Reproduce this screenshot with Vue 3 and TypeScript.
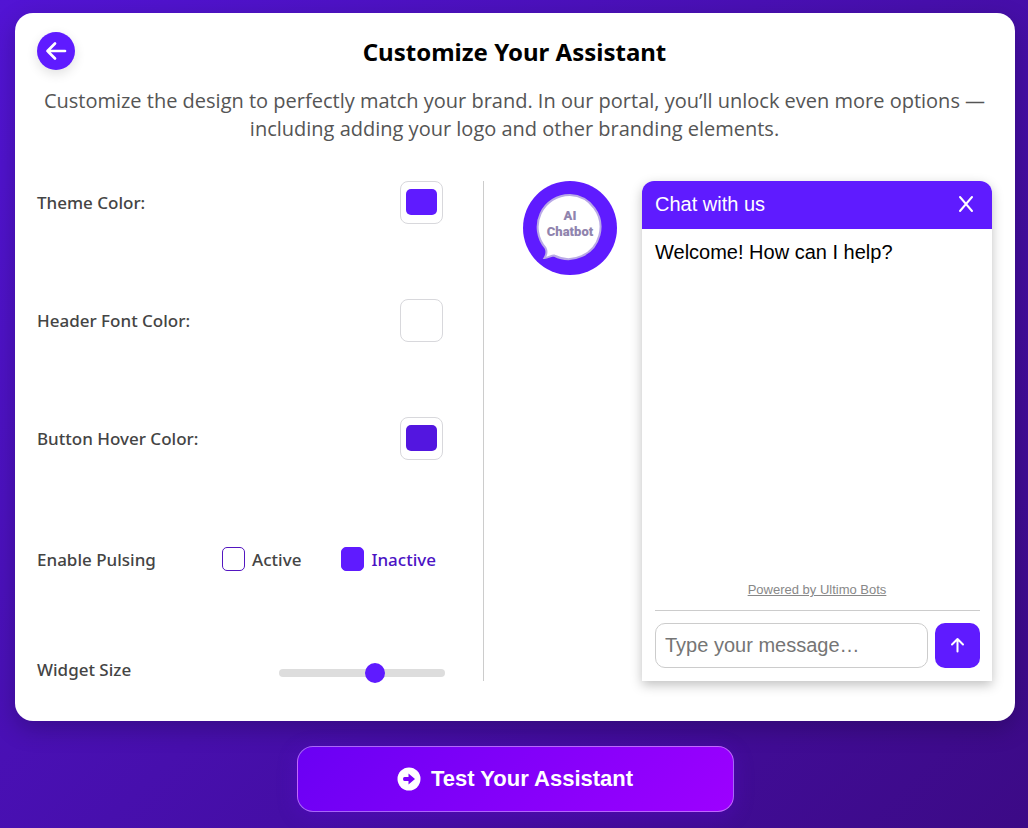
<script setup lang="ts">
import { ref } from 'vue'

interface ColorSetting {
  id: string
  label: string
  value: string
}

const colors = ref<ColorSetting[]>([
  { id: 'theme-color', label: 'Theme Color:', value: '#5f1bff' },
  { id: 'header-font-color', label: 'Header Font Color:', value: '#ffffff' },
  { id: 'button-hover-color', label: 'Button Hover Color:', value: '#5316e0' },
])
const pulsing = ref<'active' | 'inactive'>('inactive')
const widgetSize = ref(59)
const message = ref('')
</script>

<template>
  <div class="page">
    <main class="card">
      <header class="card-header">
        <button class="back" type="button" aria-label="Back">
          <svg viewBox="0 0 24 24" width="24" height="24" aria-hidden="true">
            <path d="M21 12H3.500M11 4.500L3.500 12L11 19.500" />
          </svg>
        </button>
        <h1>Customize Your Assistant</h1>
      </header>
      <p class="intro">
        Customize the design to perfectly match your brand. In our portal, you’ll unlock even more options — including
        adding your logo and other branding elements.
      </p>

      <div class="columns">
        <form class="settings" @submit.prevent>
          <div v-for="color in colors" :key="color.id" class="row">
            <label :for="color.id">{{ color.label }}</label>
            <input :id="color.id" v-model="color.value" class="swatch" type="color" />
          </div>
          <div class="row pulsing" role="radiogroup" aria-labelledby="pulsing-label">
            <span id="pulsing-label">Enable Pulsing</span>
            <div class="options">
              <label class="option">
                <input v-model="pulsing" type="radio" name="pulsing" value="active" />
                <span>Active</span>
              </label>
              <label class="option">
                <input v-model="pulsing" type="radio" name="pulsing" value="inactive" />
                <span>Inactive</span>
              </label>
            </div>
          </div>
          <div class="row">
            <label for="widget-size">Widget Size</label>
            <input id="widget-size" v-model.number="widgetSize" class="slider" type="range" min="0" max="100" />
          </div>
        </form>

        <section class="preview" aria-label="Preview">
          <button class="launcher" type="button">
            <svg viewBox="0 0 94 94" width="94" height="94" aria-hidden="true">
              <path
                d="M47 14A32 32 0 1 1 31 74.500C28 74.500 25 77 21.500 77C24 73 24 70 22.500 67A32 32 0 0 1 47 14Z"
              />
            </svg>
            <span class="launcher-text">AI<br />Chatbot</span>
          </button>

          <div class="chat">
            <div class="chat-header">
              <span>Chat with us</span>
              <button class="close" type="button" aria-label="Close">
                <svg viewBox="0 0 16 18" width="16" height="18" aria-hidden="true">
                  <path d="M2 2L14 16M14 2L2 16" />
                </svg>
              </button>
            </div>
            <div class="chat-body">Welcome! How can I help?</div>
            <a class="powered" href="#">Powered by Ultimo Bots</a>
            <form class="composer" @submit.prevent>
              <input v-model="message" type="text" placeholder="Type your message…" aria-label="Message" />
              <button type="submit" aria-label="Send">
                <svg viewBox="0 0 16 18" width="16" height="18" aria-hidden="true">
                  <path d="M7.500 14.500V2M2 7.500L7.500 2L13 7.500" />
                </svg>
              </button>
            </form>
          </div>
        </section>
      </div>
    </main>

    <button class="test" type="button">
      <svg viewBox="0 0 24 24" width="24" height="24" aria-hidden="true">
        <circle cx="12" cy="12" r="11.500" fill="#fff" />
        <path d="M7.500 10H11.500V6.500L18 12L11.500 17.500V14H7.500Q6 14 6 12Q6 10 7.500 10Z" fill="#7a00fb" />
      </svg>
      <span>Test Your Assistant</span>
    </button>
  </div>
</template>

<style>
body {
  margin: 0;
}
</style>

<style scoped>
.page {
  box-sizing: border-box;
  min-height: 100vh;
  padding: 13px 13px 16px 15px;
  display: flex;
  flex-direction: column;
  align-items: center;
  gap: 25px;
  background: linear-gradient(135deg, #5214d4, #3c0a86);
  font-family: 'Segoe UI', 'Noto Sans', sans-serif;
  color: #444;
}

button {
  padding: 0;
  border: 0;
  cursor: pointer;
}

.card {
  box-sizing: border-box;
  width: 100%;
  padding: 19px 23px 40px 22px;
  border-radius: 18px;
  background: #fff;
  box-shadow: 0 8px 24px rgba(0, 0, 0, 0.22);
}

.card-header {
  display: grid;
  grid-template-columns: 38px 1fr 38px;
  align-items: start;
}

h1 {
  margin: 0;
  color: #000;
  font-size: 24px;
  font-weight: 700;
  line-height: 40px;
  text-align: center;
}

.back {
  width: 38px;
  height: 38px;
  display: grid;
  place-items: center;
  border-radius: 50%;
  background: #5f1bff;
  box-shadow: 0 4px 12px rgba(0, 0, 0, 0.12);
}

.back svg,
.close svg,
.composer svg {
  fill: none;
  stroke: #fff;
  stroke-linecap: round;
  stroke-linejoin: round;
}

.back svg {
  stroke-width: 2.7;
}

.intro {
  margin: 15px 0 38px;
  color: #555;
  font-family: 'Segoe UI', 'Open Sans', sans-serif;
  font-size: 20px;
  line-height: 28px;
  text-align: center;
}

.columns {
  display: flex;
}

.settings {
  box-sizing: border-box;
  flex: 1;
  padding-right: 38px;
  display: flex;
  flex-direction: column;
  justify-content: space-between;
  border-right: 1px solid #ccc;
  font-size: 17px;
  font-weight: 500;
  line-height: 23px;
}

.row {
  display: flex;
  align-items: center;
  justify-content: space-between;
}

.swatch {
  box-sizing: border-box;
  width: 43px;
  height: 43px;
  margin: 0 2px 0 0;
  padding: 7px 5px 8px;
  border: 1px solid #d8d8dc;
  border-radius: 8px;
  background: #fff;
}

.swatch::-webkit-color-swatch-wrapper {
  padding: 0;
}

.swatch::-webkit-color-swatch {
  border: 0;
  border-radius: 5px;
}

.pulsing {
  height: 48px;
}

.options {
  display: flex;
  gap: 40px;
  padding-right: 9px;
}

.option {
  display: flex;
  align-items: center;
  gap: 7px;
}

.option input {
  appearance: none;
  box-sizing: border-box;
  width: 23px;
  height: 24px;
  margin: 0;
  border: 1px solid #5316c0;
  border-radius: 5px;
  background: #fff;
}

.option input:checked {
  border-color: #5f1bff;
  background: #5f1bff;
}

.option input:checked + span {
  color: #4b12c4;
}

.slider {
  appearance: none;
  width: 166px;
  height: 8px;
  margin: 6px 0 0;
  border-radius: 4px;
  background: #ddd;
}

.slider::-webkit-slider-thumb {
  appearance: none;
  width: 20px;
  height: 20px;
  border-radius: 50%;
  background: #5f1bff;
}

.preview {
  display: flex;
  align-items: flex-start;
  gap: 25px;
  padding-left: 39px;
  font-family: 'Liberation Sans', Arial, sans-serif;
}

.launcher {
  width: 94px;
  height: 94px;
  display: grid;
  place-items: center;
  border-radius: 50%;
  background: #5f1bff;
}

.launcher > * {
  grid-area: 1 / 1;
}

.launcher path {
  fill: #fff;
  stroke: #b9a9e6;
  stroke-width: 2;
}

.launcher-text {
  padding-bottom: 8px;
  color: #9084ae;
  font-family: 'Franklin Gothic Demi Cond', Roboto, sans-serif;
  font-size: 13px;
  font-weight: 900;
  line-height: 16px;
}

.chat {
  box-sizing: border-box;
  width: 350px;
  min-height: 500px;
  display: flex;
  flex-direction: column;
  border-radius: 12px 12px 0 0;
  background: #fff;
  box-shadow: 0 4px 12px rgba(0, 0, 0, 0.25);
  color: #000;
  font-size: 20px;
  line-height: 24px;
}

.chat-header {
  height: 48px;
  padding: 0 18px 2px 13px;
  box-sizing: border-box;
  display: flex;
  align-items: center;
  justify-content: space-between;
  border-radius: 12px 12px 0 0;
  background: #5f1bff;
  color: #fff;
}

.close {
  height: 18px;
  background: none;
}

.close svg {
  display: block;
  stroke-width: 2;
}

.chat-body {
  flex: 1;
  padding: 11px 13px;
}

.powered {
  align-self: center;
  color: #888;
  font-size: 13px;
  line-height: 16px;
}

.composer {
  display: flex;
  gap: 7px;
  margin: 12px 12px 0 13px;
  padding: 12px 0 13px;
  border-top: 1px solid #ccc;
}

.composer input {
  box-sizing: border-box;
  flex: 1;
  min-width: 0;
  height: 45px;
  padding: 0 9px;
  border: 1px solid #ccc;
  border-radius: 10px;
  font-family: inherit;
  font-size: 20px;
}

.composer input::placeholder {
  color: #757575;
}

.composer button {
  width: 45px;
  height: 45px;
  display: grid;
  place-items: center;
  border-radius: 10px;
  background: #5f1bff;
}

.composer svg {
  stroke-width: 2;
}

.test {
  box-sizing: border-box;
  width: 437px;
  max-width: 100%;
  height: 66px;
  display: flex;
  align-items: center;
  justify-content: center;
  gap: 10px;
  border: 1px solid rgba(255, 255, 255, 0.4);
  border-radius: 16px;
  background: linear-gradient(135deg, #6a00f4, #9d00ff);
  box-shadow: 0 4px 20px rgba(106, 0, 244, 0.25);
  color: #fff;
  font-family: 'Liberation Sans', Arial, sans-serif;
  font-size: 22px;
  font-weight: 700;
}
</style>
